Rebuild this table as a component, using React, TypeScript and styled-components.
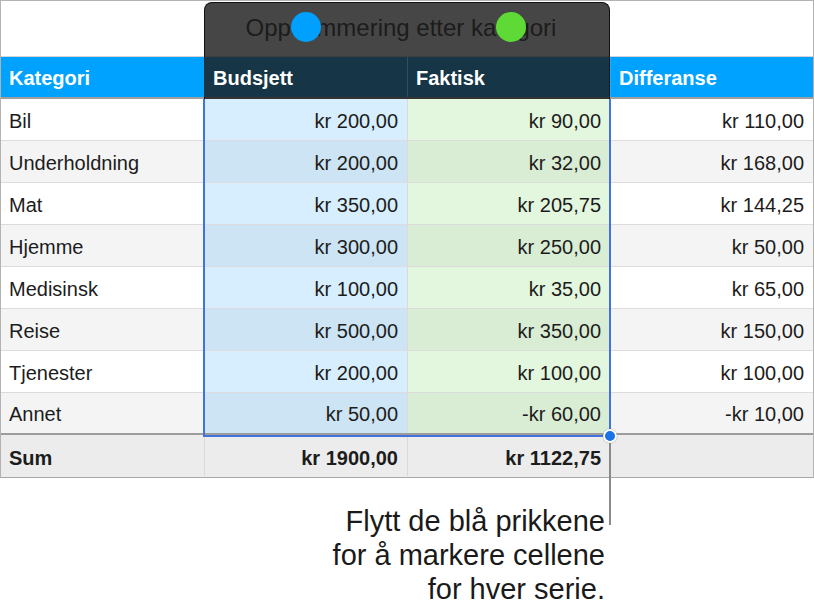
import styled, { createGlobalStyle } from "styled-components";

const GlobalStyle = createGlobalStyle`
	body {
		margin: 0;
		background: #ffffff;
		font-family: "Liberation Sans", Arial, sans-serif;
		color: #1c1c1c;
	}
`;

const Page = styled.div`
	position: relative;
	width: 814px;
	height: 612px;
	overflow: hidden;
`;

const Table = styled.div`
	width: 814px;
	box-sizing: border-box;
	border: 1px solid #b3b3b3;
	border-bottom: 1px solid #a8a8a8;
	background: #ffffff;
`;

const TitleRow = styled.div`
	height: 56px;
	box-sizing: border-box;
	padding: 0 12px 2px 0;
	display: flex;
	align-items: center;
	justify-content: center;
	font-size: 24px;
	color: #222222;
	border-bottom: 1px solid #d4d4d4;
`;

const Row = styled.div<{ $bg: string; $line: string; $lineWidth: number }>`
	display: grid;
	grid-template-columns: 203px 203px 203px 203px;
	height: ${(p) => 42 - p.$lineWidth}px;
	background: ${(p) => p.$bg};
	border-bottom: ${(p) => p.$lineWidth}px solid ${(p) => p.$line};
`;

const HeaderCell = styled.div`
	position: relative;
	z-index: 2;
	display: flex;
	align-items: center;
	padding: 2px 9px 0 8px;
	font-size: 20px;
	font-weight: 700;
	color: #ffffff;
	border-left: 1px solid rgba(255, 255, 255, 0.12);
	&:first-child {
		border-left: none;
	}
`;

const Cell = styled.div<{ $tint?: string; $right?: boolean; $bold?: boolean }>`
	display: flex;
	align-items: center;
	justify-content: ${(p) => (p.$right ? "flex-end" : "flex-start")};
	padding: ${(p) => (p.$bold ? 5 : 3)}px 9px 0 8px;
	font-size: 20px;
	font-weight: ${(p) => (p.$bold ? 700 : 400)};
	background: ${(p) => p.$tint || "transparent"};
	border-left: 1px solid #dadada;
	&:first-child {
		border-left: none;
	}
`;

const Overlay = styled.div`
	position: absolute;
	z-index: 1;
	left: 204px;
	top: 2px;
	width: 406px;
	height: 97px;
	box-sizing: border-box;
	background: rgba(27, 27, 27, 0.81);
	border: 1px solid #111111;
	border-bottom: none;
	border-radius: 8px 8px 0 0;
`;

const Dot = styled.div<{ $color: string; $x: number }>`
	position: absolute;
	z-index: 3;
	left: ${(p) => p.$x - 15}px;
	top: 12px;
	width: 30px;
	height: 30px;
	border-radius: 50%;
	background: ${(p) => p.$color};
`;

const Selection = styled.div`
	position: absolute;
	z-index: 3;
	left: 203px;
	top: 99px;
	width: 408px;
	height: 338px;
	box-sizing: border-box;
	border: 2px solid #4372dc;
	border-top: none;
`;

const Handle = styled.div`
	position: absolute;
	z-index: 4;
	left: 603px;
	top: 429px;
	width: 10px;
	height: 10px;
	border-radius: 50%;
	background: #1a73e8;
	border: 2px solid #ffffff;
	box-shadow: 0 0 1px rgba(0, 0, 0, 0.5);
`;

const Leader = styled.div`
	position: absolute;
	left: 609px;
	top: 443px;
	width: 2px;
	height: 82px;
	background: #8a8a8a;
`;

const Callout = styled.div`
	margin-top: 26px;
	padding-right: 209px;
	text-align: right;
	font-size: 29px;
	line-height: 34px;
	color: #1a1a1a;
`;

const BLUE_TINT = "rgba(0, 150, 240, 0.16)";
const GREEN_TINT = "rgba(60, 190, 20, 0.14)";

const data = [
	["Bil", "kr 200,00", "kr 90,00", "kr 110,00"],
	["Underholdning", "kr 200,00", "kr 32,00", "kr 168,00"],
	["Mat", "kr 350,00", "kr 205,75", "kr 144,25"],
	["Hjemme", "kr 300,00", "kr 250,00", "kr 50,00"],
	["Medisinsk", "kr 100,00", "kr 35,00", "kr 65,00"],
	["Reise", "kr 500,00", "kr 350,00", "kr 150,00"],
	["Tjenester", "kr 200,00", "kr 100,00", "kr 100,00"],
	["Annet", "kr 50,00", "-kr 60,00", "-kr 10,00"],
];

const App = (): JSX.Element => {
	return (
		<Page>
			<GlobalStyle />
			<Table>
				<TitleRow>Oppsummering etter kategori</TitleRow>
				<Row $bg="#00a2ff" $line="#9e9e9e" $lineWidth={2}>
					<HeaderCell>Kategori</HeaderCell>
					<HeaderCell>Budsjett</HeaderCell>
					<HeaderCell>Faktisk</HeaderCell>
					<HeaderCell>Differanse</HeaderCell>
				</Row>
				{data.map((row, i) => (
					<Row
						key={row[0]}
						$bg={i % 2 === 0 ? "#ffffff" : "#f4f4f4"}
						$line={i === data.length - 1 ? "#9c9c9c" : "#dcdcdc"}
						$lineWidth={i === data.length - 1 ? 2 : 1}
					>
						<Cell>{row[0]}</Cell>
						<Cell $right $tint={BLUE_TINT}>
							{row[1]}
						</Cell>
						<Cell $right $tint={GREEN_TINT}>
							{row[2]}
						</Cell>
						<Cell $right>{row[3]}</Cell>
					</Row>
				))}
				<Row $bg="#ececec" $line="#ececec" $lineWidth={1}>
					<Cell $bold>Sum</Cell>
					<Cell $right $bold>
						kr 1900,00
					</Cell>
					<Cell $right $bold>
						kr 1122,75
					</Cell>
					<Cell $bold />
				</Row>
			</Table>
			<Callout>
				Flytt de blå prikkene
				<br />
				for å markere cellene
				<br />
				for hver serie.
			</Callout>
			<Overlay />
			<Dot $color="#00a0ff" $x={306} />
			<Dot $color="#5fd935" $x={511} />
			<Selection />
			<Leader />
			<Handle />
		</Page>
	);
};

export default App;
